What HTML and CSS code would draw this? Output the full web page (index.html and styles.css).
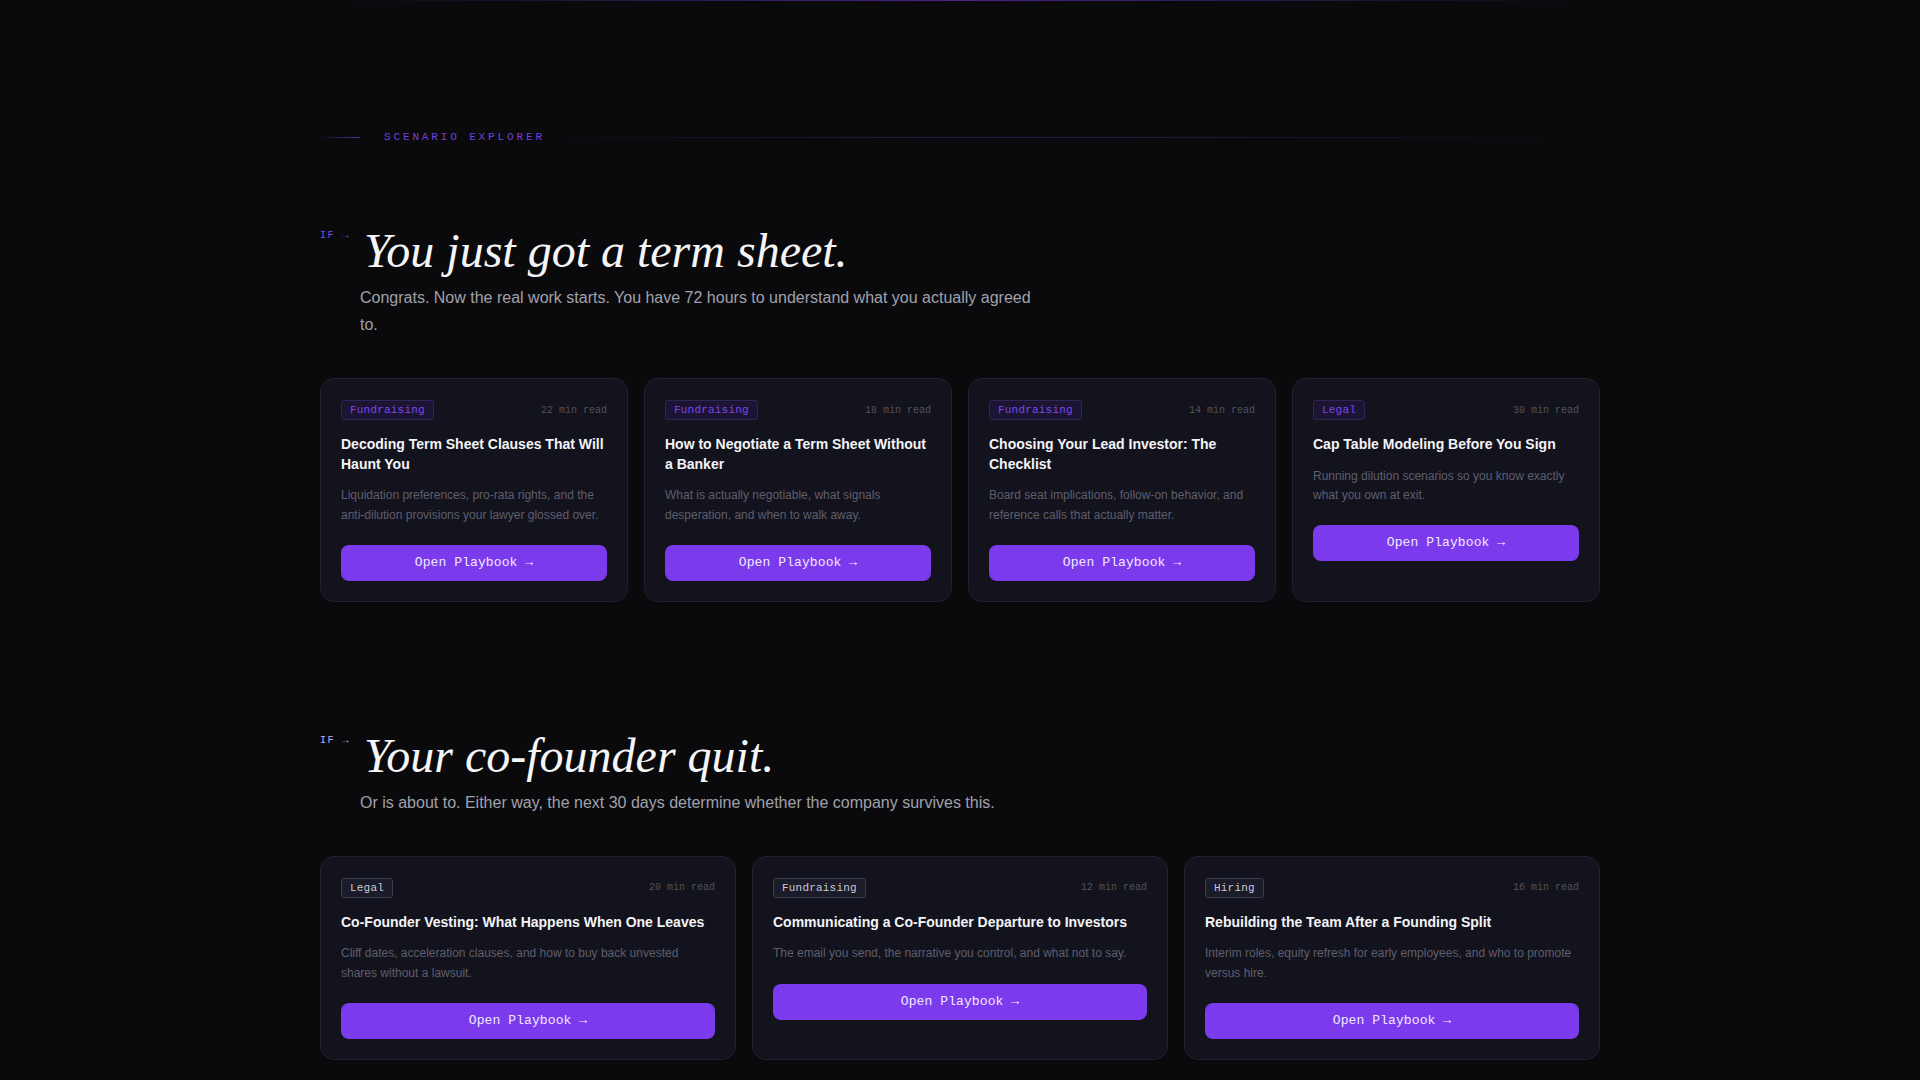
FILE: index.html
```html
<!DOCTYPE html>
<html lang="en">
<head>
<meta charset="utf-8">
<title>Scenario Explorer</title>
<link rel="stylesheet" href="styles.css">
</head>
<body>
<div class="topline"></div>
<main class="wrap">
  <div class="eyebrow">
    <span class="eyebrow-lead"></span>
    <span class="eyebrow-text">SCENARIO EXPLORER</span>
    <span class="eyebrow-rule"></span>
  </div>

  <section class="scenario scenario--active">
    <header class="scenario-head">
      <span class="if">IF →</span>
      <div class="scenario-copy">
        <h2 class="scenario-title">You just got a term sheet.</h2>
        <p class="scenario-sub">Congrats. Now the real work starts. You have 72 hours to understand what you actually agreed to.</p>
      </div>
    </header>
    <div class="grid grid-4">
      <article class="card">
        <div class="card-top"><span class="tag">Fundraising</span><span class="meta">22 min read</span></div>
        <h3 class="card-title">Decoding Term Sheet Clauses That Will Haunt You</h3>
        <p class="card-desc">Liquidation preferences, pro-rata rights, and the anti-dilution provisions your lawyer glossed over.</p>
        <button class="btn">Open Playbook →</button>
      </article>
      <article class="card">
        <div class="card-top"><span class="tag">Fundraising</span><span class="meta">18 min read</span></div>
        <h3 class="card-title">How to Negotiate a Term Sheet Without a Banker</h3>
        <p class="card-desc">What is actually negotiable, what signals desperation, and when to walk away.</p>
        <button class="btn">Open Playbook →</button>
      </article>
      <article class="card">
        <div class="card-top"><span class="tag">Fundraising</span><span class="meta">14 min read</span></div>
        <h3 class="card-title">Choosing Your Lead Investor: The Checklist</h3>
        <p class="card-desc">Board seat implications, follow-on behavior, and reference calls that actually matter.</p>
        <button class="btn">Open Playbook →</button>
      </article>
      <article class="card">
        <div class="card-top"><span class="tag">Legal</span><span class="meta">30 min read</span></div>
        <h3 class="card-title">Cap Table Modeling Before You Sign</h3>
        <p class="card-desc">Running dilution scenarios so you know exactly what you own at exit.</p>
        <button class="btn">Open Playbook →</button>
      </article>
    </div>
  </section>

  <section class="scenario">
    <header class="scenario-head">
      <span class="if">IF →</span>
      <div class="scenario-copy">
        <h2 class="scenario-title">Your co-founder quit.</h2>
        <p class="scenario-sub">Or is about to. Either way, the next 30 days determine whether the company survives this.</p>
      </div>
    </header>
    <div class="grid grid-3">
      <article class="card">
        <div class="card-top"><span class="tag">Legal</span><span class="meta">20 min read</span></div>
        <h3 class="card-title">Co-Founder Vesting: What Happens When One Leaves</h3>
        <p class="card-desc">Cliff dates, acceleration clauses, and how to buy back unvested shares without a lawsuit.</p>
        <button class="btn">Open Playbook →</button>
      </article>
      <article class="card">
        <div class="card-top"><span class="tag">Fundraising</span><span class="meta">12 min read</span></div>
        <h3 class="card-title">Communicating a Co-Founder Departure to Investors</h3>
        <p class="card-desc">The email you send, the narrative you control, and what not to say.</p>
        <button class="btn">Open Playbook →</button>
      </article>
      <article class="card">
        <div class="card-top"><span class="tag">Hiring</span><span class="meta">16 min read</span></div>
        <h3 class="card-title">Rebuilding the Team After a Founding Split</h3>
        <p class="card-desc">Interim roles, equity refresh for early employees, and who to promote versus hire.</p>
        <button class="btn">Open Playbook →</button>
      </article>
    </div>
  </section>
</main>
</body>
</html>
```

FILE: styles.css
```css
* { box-sizing: border-box; }

html, body {
  margin: 0;
  padding: 0;
  background: #0a0a0d;
  color: #f4f4f6;
  font-family: "Liberation Sans", Arial, sans-serif;
}

.topline {
  height: 1px;
  background: linear-gradient(90deg, transparent 18%, rgba(124, 58, 237, 0.55) 50%, transparent 82%);
}

.wrap {
  width: 1280px;
  margin: 0 auto;
  padding-top: 128px;
}

.eyebrow {
  display: flex;
  align-items: center;
  gap: 24px;
  height: 16px;
  margin-bottom: 80px;
}

.eyebrow-lead {
  width: 40px;
  height: 1px;
  background: linear-gradient(90deg, transparent, rgba(124, 58, 237, 0.7));
}

.eyebrow-text {
  font-family: "Liberation Mono", "DejaVu Sans Mono", monospace;
  font-size: 11px;
  letter-spacing: 0.26em;
  color: #7042dc;
  line-height: 16px;
}

.eyebrow-rule {
  flex: 1;
  height: 1px;
  margin-right: 50px;
  background: linear-gradient(90deg, rgba(124, 58, 237, 0.04), rgba(124, 58, 237, 0.3) 45%, rgba(124, 58, 237, 0.1) 85%, transparent);
}

.scenario { margin-bottom: 128px; }

.scenario-head {
  display: flex;
  align-items: flex-start;
  margin-bottom: 40px;
}

.if {
  width: 40px;
  flex: none;
  padding-top: 5px;
  font-family: "Liberation Mono", "DejaVu Sans Mono", monospace;
  font-size: 10px;
  line-height: 12px;
  letter-spacing: 1.5px;
  color: #c4b5fd;
}

.scenario--active .if { color: #7c4fe6; }

.scenario-copy { flex: 1; }

.scenario-title {
  margin: 0;
  padding-left: 4px;
  font-family: "Liberation Serif", "Times New Roman", serif;
  font-style: italic;
  font-weight: 400;
  font-size: 48px;
  line-height: 1.1;
  color: #f5f5f7;
}

.scenario-sub {
  margin: 6px 0 0;
  max-width: 680px;
  font-size: 16px;
  line-height: 1.7;
  color: #a1a1ab;
}

.grid {
  display: grid;
  gap: 16px;
}

.grid-4 { grid-template-columns: repeat(4, 1fr); }
.grid-3 { grid-template-columns: repeat(3, 1fr); }

.card {
  background: #13131d;
  border: 1px solid #212030;
  border-radius: 14px;
  padding: 21px 20px 20px;
}

.card-top {
  display: flex;
  align-items: center;
  justify-content: space-between;
}

.tag {
  font-family: "Liberation Mono", "DejaVu Sans Mono", monospace;
  font-size: 11px;
  line-height: 14px;
  letter-spacing: 0.2px;
  padding: 2px 8px;
  border-radius: 3px;
  border: 1px solid #3a3a4d;
  background: #1b1b29;
  color: #cacad8;
}

.scenario--active .tag {
  border-color: #2f2556;
  background: #1b1533;
  color: #7d45ec;
}

.meta {
  font-family: "Liberation Mono", "DejaVu Sans Mono", monospace;
  font-size: 10px;
  color: #52525f;
}

.card-title {
  margin: 15px 0 0;
  font-size: 14px;
  line-height: 1.4;
  font-weight: 700;
  color: #f4f4f8;
}

.card-desc {
  margin: 12px 0 0;
  font-size: 12px;
  line-height: 1.6;
  color: #5e5e6d;
}

.btn {
  display: block;
  width: 100%;
  margin-top: 20px;
  padding: 10px 0;
  border: 0;
  border-radius: 8px;
  background: #7c3aed;
  color: #efeaff;
  font-family: "Liberation Mono", "DejaVu Sans Mono", monospace;
  font-size: 13px;
  line-height: 16px;
  letter-spacing: 0.1px;
  text-align: center;
}
```
